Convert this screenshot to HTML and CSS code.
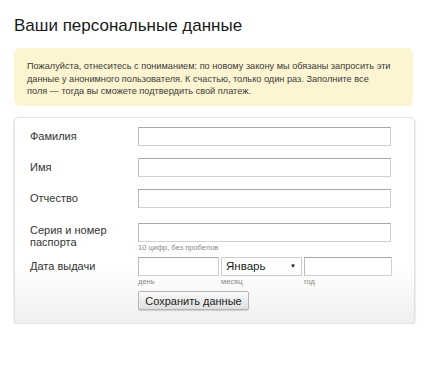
FILE: index.html
```html
<!DOCTYPE html>
<html lang="ru">
<head>
    <meta charset="UTF-8">
    <title>Ваши персональные данные</title>
    <link rel="stylesheet" href="styles.css">
</head>
<body>

<h1 class="title">Ваши персональные данные</h1>

<div class="notice">
    Пожалуйста, отнеситесь с пониманием: по новому закону мы обязаны запросить эти<br>
    данные у анонимного пользователя. К счастью, только один раз. Заполните все<br>
    поля — тогда вы сможете подтвердить свой платеж.
</div>

<form class="card">
    <div class="row">
        <label class="label">Фамилия</label>
        <div class="field"><input type="text" class="input"></div>
    </div>
    <div class="row">
        <label class="label">Имя</label>
        <div class="field"><input type="text" class="input"></div>
    </div>
    <div class="row">
        <label class="label">Отчество</label>
        <div class="field"><input type="text" class="input"></div>
    </div>
    <div class="row row-passport">
        <label class="label label-two">Серия и номер паспорта</label>
        <div class="field">
            <input type="text" class="input">
            <div class="hint">10 цифр, без пробелов</div>
        </div>
    </div>
    <div class="row row-date">
        <label class="label">Дата выдачи</label>
        <div class="field date">
            <div class="date-part day">
                <input type="text" class="input">
                <div class="hint">день</div>
            </div>
            <div class="date-part month">
                <div class="select">Январь <span class="arrow">▼</span></div>
                <div class="hint">месяц</div>
            </div>
            <div class="date-part year">
                <input type="text" class="input">
                <div class="hint">год</div>
            </div>
        </div>
    </div>
    <div class="row row-last">
        <div></div>
        <div class="field"><button type="button" class="btn">Сохранить данные</button></div>
    </div>
</form>

</body>
</html>
```

FILE: styles.css
```css
body {
    margin: 0;
    padding: 0 20px 0 14px;
    font-family: "Liberation Sans", Arial, sans-serif;
    color: #222;
    background: #fff;
}
.title {
    margin: 0;
    padding-top: 15px;
    font-size: 17px;
    font-weight: normal;
    line-height: 21px;
    color: #1a1a1a;
}
.notice {
    margin-top: 12px;
    width: 373px;
    padding: 12px 13px 8px 13px;
    background-color: #fdf5d2;
    border-radius: 6px;
    font-size: 9.2px;
    line-height: 12.5px;
    color: #3a3a3a;
    white-space: nowrap;
}
.card {
    margin-top: 11px;
    width: 376px;
    padding: 9px 8px 13px 15px;
    border: 1px solid #e2e2e2;
    border-radius: 5px;
    box-shadow: 0 1px 2px rgba(0,0,0,0.25);
    background: linear-gradient(to bottom, #fff 0, #fff 150px, #efefef 100%);
}
.row {
    display: grid;
    grid-template-columns: 108px 253px;
    margin-bottom: 12px;
}
.row-passport {
    margin-top: 15px;
    margin-bottom: 5px;
}
.row-date {
    margin-bottom: 5px;
}
.row-last {
    margin-bottom: 0;
}
.label {
    font-size: 11px;
    line-height: 19px;
    color: #333;
}
.label-two {
    line-height: 12px;
    padding-top: 1px;
}
.input {
    display: block;
    width: 100%;
    height: 19px;
    box-sizing: border-box;
    border: 1px solid #d0d0d0;
    border-top-color: #a8a8a8;
    border-left-color: #bbb;
    background: #fff;
    margin: 0;
    padding: 0 3px;
}
.hint {
    font-size: 7.5px;
    line-height: 9px;
    color: #888;
    margin-top: 1px;
}
.date {
    display: grid;
    grid-template-columns: 81px 81px 88px;
    column-gap: 2px;
}
.select {
    height: 19px;
    box-sizing: border-box;
    border: 1px solid #ccc;
    padding: 0 5px 0 4px;
    font-size: 11.5px;
    line-height: 17px;
    color: #222;
    display: flex;
    justify-content: space-between;
    align-items: center;
}
.arrow {
    font-size: 6px;
    color: #111;
}
.btn {
    width: 111px;
    height: 19px;
    padding: 0;
    font-family: "Liberation Sans", Arial, sans-serif;
    font-size: 11px;
    color: #222;
    border: 1px solid #b5b5b5;
    border-radius: 2px;
    background: linear-gradient(to bottom, #fafafa, #dedede);
    box-shadow: 0 1px 1px rgba(0,0,0,0.15);
}
```
